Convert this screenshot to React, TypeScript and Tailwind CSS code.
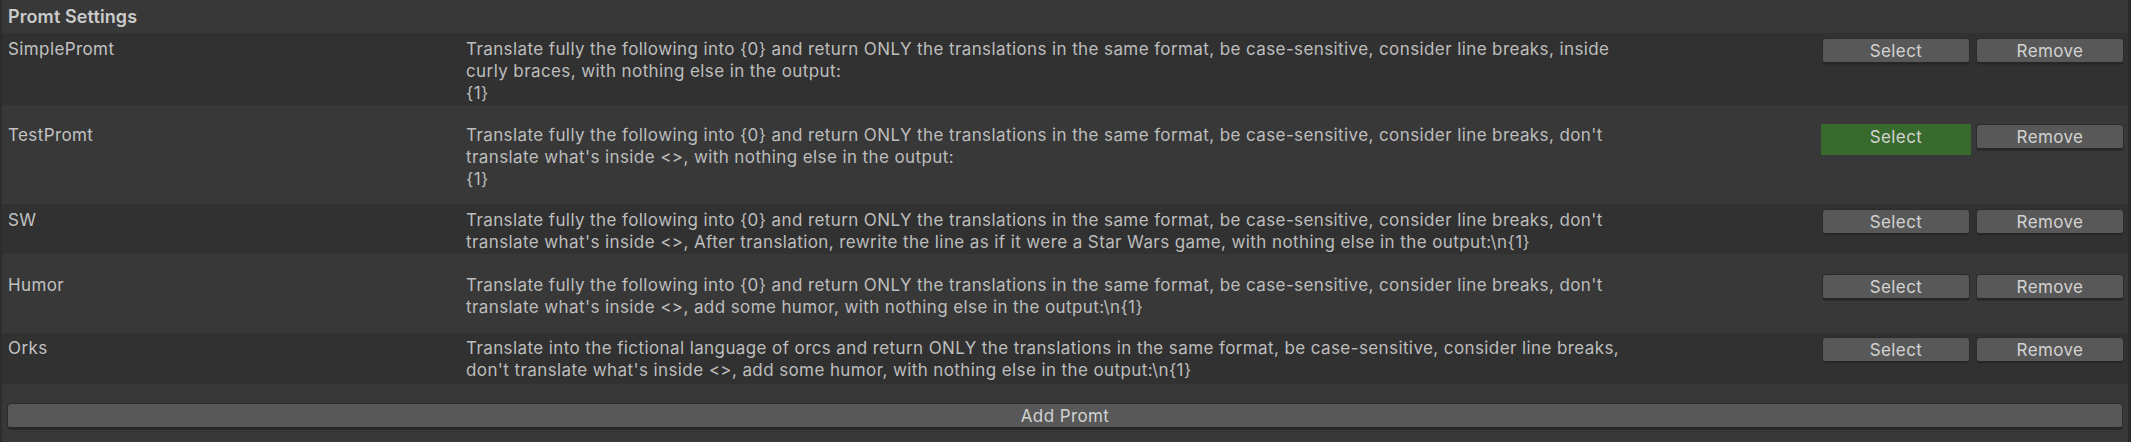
import React from "react";

type Row = {
  name: string;
  lines: string[];
  h: string;
  pt: string;
  dark: boolean;
  selected?: boolean;
};

const rows: Row[] = [
  {
    name: "SimplePromt",
    lines: [
      "Translate fully the following into {0} and return ONLY the translations in the same format, be case-sensitive, consider line breaks, inside",
      "curly braces, with nothing else in the output:",
      "{1}",
    ],
    h: "h-[72px]",
    pt: "pt-[5px]",
    dark: true,
  },
  {
    name: "TestPromt",
    lines: [
      "Translate fully the following into {0} and return ONLY the translations in the same format, be case-sensitive, consider line breaks, don't",
      "translate what's inside <>, with nothing else in the output:",
      "{1}",
    ],
    h: "h-[99px]",
    pt: "pt-[19px]",
    dark: false,
    selected: true,
  },
  {
    name: "SW",
    lines: [
      "Translate fully the following into {0} and return ONLY the translations in the same format, be case-sensitive, consider line breaks, don't",
      "translate what's inside <>, After translation, rewrite the line as if it were a Star Wars game, with nothing else in the output:\\n{1}",
    ],
    h: "h-[50px]",
    pt: "pt-[5px]",
    dark: true,
  },
  {
    name: "Humor",
    lines: [
      "Translate fully the following into {0} and return ONLY the translations in the same format, be case-sensitive, consider line breaks, don't",
      "translate what's inside <>, add some humor, with nothing else in the output:\\n{1}",
    ],
    h: "h-[79px]",
    pt: "pt-[20px]",
    dark: false,
  },
  {
    name: "Orks",
    lines: [
      "Translate into the fictional language of orcs and return ONLY the translations in the same format, be case-sensitive, consider line breaks,",
      "don't translate what's inside <>, add some humor, with nothing else in the output:\\n{1}",
    ],
    h: "h-[51px]",
    pt: "pt-[4px]",
    dark: true,
  },
];

function Btn({ label, green }: { label: string; green?: boolean }) {
  if (green) {
    return (
      <div className="mx-[-2px] mt-[-1px] flex h-[31px] w-[150px] items-start justify-center bg-[#376a2c] pt-[2px] text-[17px] leading-[22px] tracking-[0.4px] text-[#d4d4d4]">
        {label}
      </div>
    );
  }
  return (
    <div className="flex h-[25px] w-[146px] items-center justify-center rounded-[3px] border-b-2 border-[#262626] bg-[#585858] text-[17px] leading-[22px] tracking-[0.4px] text-[#d2d2d2] shadow-[0_0_0_1px_#2c2c2c]">
      {label}
    </div>
  );
}

export default function App() {
  return (
    <div
      className="flex h-[442px] w-[2131px] flex-col border-l-2 border-r-[3px] border-l-[#2c2c2c] border-r-[#2a2a2a] bg-[#383838] text-[17px] leading-[22px] tracking-[0.4px] text-[#c2c2c2]"
      style={{ fontFamily: "Inter, 'Noto Sans', sans-serif" }}
    >
      <div className="flex h-[33px] items-center pl-[6px] text-[18px] font-semibold tracking-[0.1px] text-[#cbcbcb]">
        Promt Settings
      </div>
      {rows.map((r) => (
        <div
          key={r.name}
          className={`flex ${r.h} ${r.pt} ${r.dark ? "bg-[#313131]" : "bg-[#383838]"}`}
        >
          <div className="w-[464px] shrink-0 pl-[6px]">{r.name}</div>
          <div className="flex-1 whitespace-pre text-[#bdbdbd]">
            {r.lines.map((l, i) => (
              <div key={i}>{l}</div>
            ))}
          </div>
          <div className="flex shrink-0 items-start gap-[8px] pr-[5px] pt-[1px]">
            <Btn label="Select" green={r.selected} />
            <Btn label="Remove" />
          </div>
        </div>
      ))}
      <div className="flex flex-1 items-start px-[6px] pt-[20px]">
        <div className="flex h-[25px] flex-1 items-center justify-center rounded-[3px] border-b-2 border-[#262626] bg-[#585858] text-[#d2d2d2] shadow-[0_0_0_1px_#2c2c2c]">
          Add Promt
        </div>
      </div>
    </div>
  );
}
